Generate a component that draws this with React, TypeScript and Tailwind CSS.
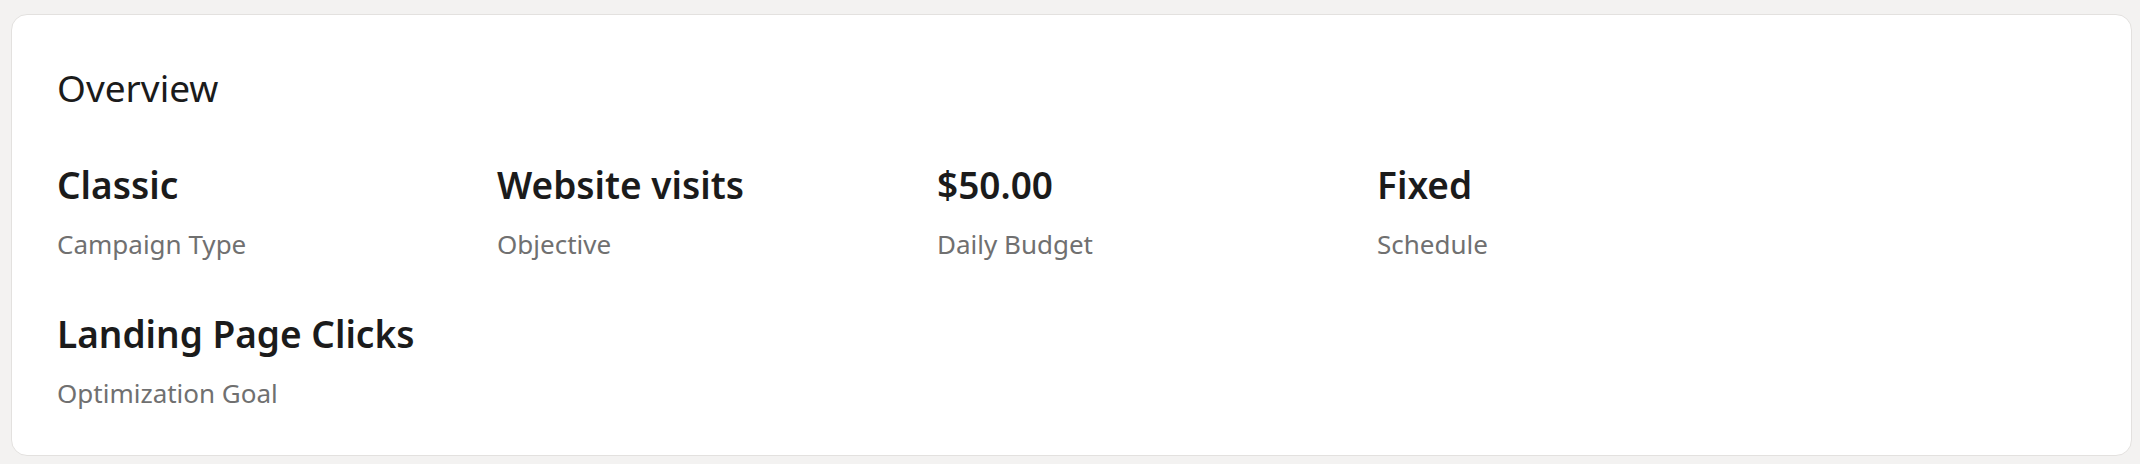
import React from "react";

type Stat = {
  value: string;
  label: string;
};

const stats: Stat[] = [
  { value: "Classic", label: "Campaign Type" },
  { value: "Website visits", label: "Objective" },
  { value: "$50.00", label: "Daily Budget" },
  { value: "Fixed", label: "Schedule" },
  { value: "Landing Page Clicks", label: "Optimization Goal" },
];

export default function App() {
  return (
    <div className="min-h-[464px] w-full bg-[#f3f2f1] pl-[11px] pr-[8px] pt-[14px] pb-[9px] font-['Noto_Sans','Open_Sans',sans-serif]">
      {/* overview card */}
      <div className="rounded-[16px] border border-[#e3e1df] bg-white px-[45px] pt-[48px] pb-[44px]">
        <h2 className="text-[37px] leading-[50px] font-normal text-[#1b1b1b]">
          Overview
        </h2>
        <div className="mt-[48px] grid grid-cols-[repeat(4,440px)] gap-y-[48px]">
          {stats.map((s) => (
            <div key={s.label} className="flex flex-col gap-[17px]">
              <div className="text-[37px] leading-[48px] font-semibold text-[#1b1b1b]">
                {s.value}
              </div>
              <div className="text-[26px] leading-[36px] text-[#707070]">
                {s.label}
              </div>
            </div>
          ))}
        </div>
      </div>
    </div>
  );
}
